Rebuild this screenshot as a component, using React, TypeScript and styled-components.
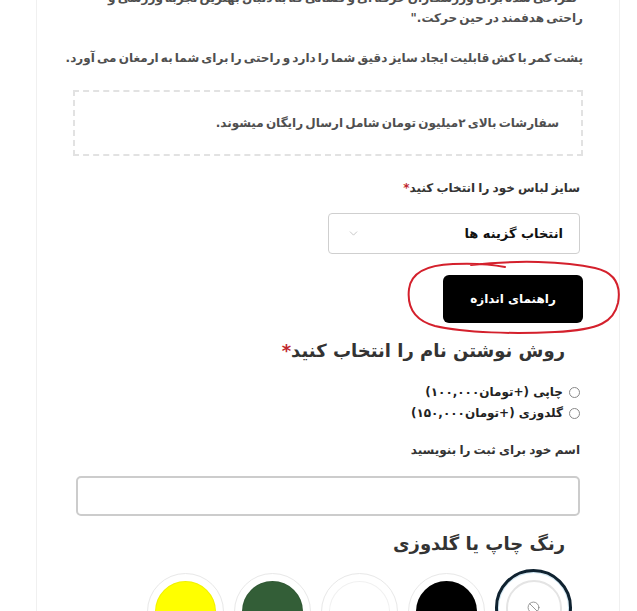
import styled, { createGlobalStyle } from 'styled-components';
import { Ban, ChevronDown } from 'lucide-react';

const GlobalStyle = createGlobalStyle`
  body {
    margin: 0;
    background: #fff;
    font-family: "DejaVu Sans", "Noto Sans", sans-serif;
  }
`;

const Page = styled.div`
  direction: rtl;
  height: 611px;
  overflow: hidden;
`;

const Card = styled.div`
  position: relative;
  margin: -12px 17px 0 36px;
  padding: 0 36px 40px;
  border-left: 1px solid #f0f0f0;
  border-right: 1px solid #f0f0f0;
`;

const Text = styled.p`
  margin: 0;
  font-size: 12px;
  font-weight: 700;
  line-height: 20px;
  word-spacing: -2px;
  color: #4f4f4f;
  white-space: nowrap;
`;

const Intro = styled(Text)`
  margin-bottom: 20px;
`;

const Notice = styled.div`
  margin-top: 22px;
  height: 62px;
  border: 2px dashed #e2e2e2;
  padding: 0 22px;
  display: flex;
  align-items: center;
`;

const Field = styled.div`
  margin: 22px 3px 0;
`;

const Label = styled.div`
  font-size: 12px;
  font-weight: 700;
  color: #333;
  line-height: 20px;
  word-spacing: -1px;
`;

const Required = styled.span`
  color: #c0262d;
`;

const SelectBox = styled.div`
  margin-top: 15px;
  width: 252px;
  height: 41px;
  box-sizing: border-box;
  border: 1px solid #cfcfcf;
  border-radius: 4px;
  display: flex;
  align-items: center;
  justify-content: space-between;
  padding: 0 16px 0 18px;
  font-size: 13px;
  font-weight: 700;
  color: #111;
`;

const GuideWrap = styled.div`
  position: relative;
  margin-top: 21px;
  display: flex;
`;

const GuideButton = styled.button`
  width: 140px;
  height: 48px;
  border: 0;
  border-radius: 6px;
  background: #000;
  color: #fff;
  font-family: inherit;
  font-size: 12px;
  font-weight: 700;
`;

const Scribble = styled.svg`
  position: absolute;
  top: -16px;
  right: -40px;
  width: 218px;
  height: 76px;
  pointer-events: none;
`;

const Heading = styled.h3`
  margin: 14px 18px 0 0;
  font-size: 18px;
  font-weight: 700;
  color: #333;
  line-height: 28px;
`;

const RadioList = styled.div`
  margin: 18px 3px 0 0;
  display: flex;
  flex-direction: column;
  gap: 3px;
`;

const RadioRow = styled.label`
  display: flex;
  align-items: center;
  gap: 6px;
  font-size: 12px;
  font-weight: 700;
  color: #222;
  line-height: 18px;
`;

const RadioDot = styled.span`
  width: 11px;
  height: 11px;
  border: 1px solid #888;
  border-radius: 50%;
  box-sizing: border-box;
`;

const NameLabel = styled(Label)`
  margin: 18px 3px 0;
`;

const TextInput = styled.div`
  margin: 16px 3px 0 3px;
  height: 40px;
  border: 2px solid #cccccc;
  border-radius: 5px;
  box-sizing: border-box;
`;

const ColorHeading = styled(Heading)`
  margin-top: 14px;
`;

const Swatches = styled.div`
  margin: 15px 11px 0 0;
  display: flex;
  gap: 10px;
`;

const Swatch = styled.div<{ $selected?: boolean }>`
  width: 77px;
  height: 77px;
  box-sizing: border-box;
  border-radius: 50%;
  border: ${({ $selected }) => ($selected ? '3px solid #0f2230' : '1px solid #e8e8e8')};
  box-shadow: ${({ $selected }) => ($selected ? 'inset 0 0 0 1px #cfe8f5' : 'none')};
  display: flex;
  align-items: center;
  justify-content: center;
  margin-top: ${({ $selected }) => ($selected ? '-4px' : '0')};
`;

const Fill = styled.div<{ $color: string }>`
  width: 61px;
  height: 61px;
  border-radius: 50%;
  background: ${({ $color }) => $color};
  box-shadow: inset 0 0 0 1px rgba(0, 0, 0, 0.06);
`;

const NoneFill = styled.div`
  width: 56px;
  height: 56px;
  box-sizing: border-box;
  border-radius: 50%;
  border: 2px solid #e4e4e4;
  display: flex;
  align-items: center;
  justify-content: center;
  color: #888;
`;

const colors = ['#000000', '#ffffff', '#335e37', '#ffff00'];

export default function App() {
  return (
    <Page>
      <GlobalStyle />
      <Card>
        <Intro>
          "طراحی شده برای ورزشکاران حرفه ای و کسانی که به دنبال بهترین تجربه ورزشی و
          <br />
          راحتی هدفمند در حین حرکت."
        </Intro>
        <Text>پشت کمر با کش قابلیت ایجاد سایز دقیق شما را دارد و راحتی را برای شما به ارمغان می آورد.</Text>
        <Notice>
          <Text>سفارشات بالای ۲میلیون تومان شامل ارسال رایگان میشوند.</Text>
        </Notice>
        <Field>
          <Label>
            سایز لباس خود را انتخاب کنید<Required>*</Required>
          </Label>
          <SelectBox>
            <span>انتخاب گزینه ها</span>
            <ChevronDown size={13} color="#bbb" strokeWidth={1.5} />
          </SelectBox>
        </Field>
        <GuideWrap>
          <GuideButton>راهنمای اندازه</GuideButton>
          <Scribble viewBox="0 0 218 76">
            <path
              d="M66 6 C110 1 160 2 190 9 C212 14 216 28 213 44 C209 62 196 71 150 73 C110 75 60 74 30 67 C8 61 2 47 4 30 C6 14 20 6 48 5 C70 4 90 6 100 8"
              fill="none"
              stroke="#d4202c"
              strokeWidth="2"
              strokeLinecap="round"
            />
          </Scribble>
        </GuideWrap>
        <Heading>
          روش نوشتن نام را انتخاب کنید<Required>*</Required>
        </Heading>
        <RadioList>
          <RadioRow>
            <RadioDot />
            چاپی (+تومان۱۰۰,۰۰۰)
          </RadioRow>
          <RadioRow>
            <RadioDot />
            گلدوزی (+تومان۱۵۰,۰۰۰)
          </RadioRow>
        </RadioList>
        <NameLabel>اسم خود برای ثبت را بنویسید</NameLabel>
        <TextInput />
        <ColorHeading>رنگ چاپ یا گلدوزی</ColorHeading>
        <Swatches>
          <Swatch $selected>
            <NoneFill>
              <Ban size={13} strokeWidth={1.6} />
            </NoneFill>
          </Swatch>
          {colors.map((c) => (
            <Swatch key={c}>
              <Fill $color={c} />
            </Swatch>
          ))}
        </Swatches>
      </Card>
    </Page>
  );
}
